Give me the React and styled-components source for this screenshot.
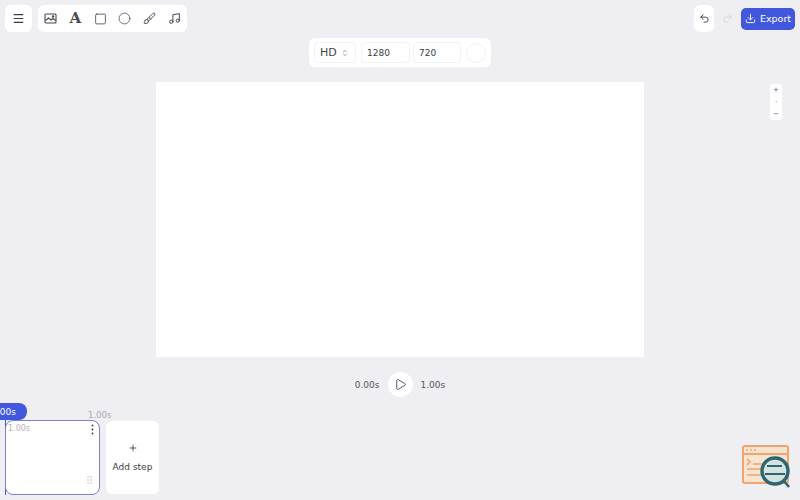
import React from 'react';
import styled, { createGlobalStyle } from 'styled-components';
import {
  Menu,
  Square,
  Circle,
  Brush,
  Music,
  Undo2,
  Redo2,
  Download,
  ChevronsUpDown,
  Play,
  Plus,
} from 'lucide-react';

const GlobalStyle = createGlobalStyle`
  html, body {
    margin: 0;
    padding: 0;
    height: 100%;
    background: #eeeef3;
    overflow: hidden;
  }
  body {
    font-family: "DejaVu Sans", sans-serif;
    color: #2c2c33;
  }
`;

const Page = styled.div`
  position: relative;
  width: 800px;
  height: 500px;
  overflow: hidden;
  display: flex;
  flex-direction: column;
`;

const TopBar = styled.div`
  display: flex;
  align-items: center;
  height: 27px;
  margin-top: 5px;
  padding: 0 5px;
`;

const Panel = styled.div`
  display: flex;
  align-items: center;
  justify-content: center;
  height: 27px;
  background: #fff;
  border-radius: 6px;
`;

const MenuPanel = styled(Panel)`
  width: 27px;
  margin-right: 6px;
`;

const ToolPanel = styled(Panel)`
  width: 149px;
  justify-content: space-between;
  padding: 0 6px;
  box-sizing: border-box;
`;

const Tool = styled.div`
  display: flex;
  align-items: center;
  justify-content: center;
  width: 13px;
  color: #44444c;
`;

const LetterTool = styled(Tool)`
  font-family: "DejaVu Serif", serif;
  font-weight: 700;
  font-size: 15px;
  line-height: 15px;
  color: #4a4a52;
`;

const Spacer = styled.div`
  flex: 1;
`;

const UndoPanel = styled(Panel)`
  width: 20px;
`;

const RedoSlot = styled.div`
  display: flex;
  justify-content: center;
  width: 27px;
  color: #d2d2d8;
`;

const ExportButton = styled.div`
  display: flex;
  align-items: center;
  justify-content: center;
  gap: 4px;
  width: 54px;
  height: 22px;
  border-radius: 5px;
  background: #4258dc;
  color: #fff;
  font-size: 9.5px;
`;

const SizeRow = styled.div`
  display: flex;
  justify-content: center;
  margin-top: 6px;
`;

const SizePanel = styled.div`
  display: flex;
  align-items: center;
  gap: 5px;
  width: 182px;
  height: 29px;
  padding: 0 5px;
  box-sizing: border-box;
  background: #fff;
  border-radius: 6px;
`;

const PresetSelect = styled.div`
  display: flex;
  flex: none;
  align-items: center;
  justify-content: space-between;
  box-sizing: border-box;
  width: 42px;
  height: 21px;
  padding: 0 6px 0 5px;
  border: 1px solid #f2f2f5;
  border-radius: 4px;
  font-size: 11px;
  color: #44444c;
`;

const SizeField = styled.div`
  display: flex;
  flex: none;
  align-items: center;
  box-sizing: border-box;
  width: ${(props) => props.$width}px;
  height: 21px;
  padding-left: 5px;
  margin-left: ${(props) => props.$pull || 0}px;
  border: 1px solid #f2f2f5;
  border-radius: 4px;
  font-size: 9px;
  color: #3c3c44;
`;

const Swatch = styled.div`
  flex: none;
  box-sizing: border-box;
  width: 20px;
  height: 20px;
  border: 1px solid #efeff2;
  border-radius: 50%;
  background: #fff;
`;

const CanvasRow = styled.div`
  display: flex;
  justify-content: center;
  margin-top: 15px;
`;

const Canvas = styled.div`
  width: 488px;
  height: 275px;
  background: #fff;
`;

const PlayRow = styled.div`
  display: flex;
  align-items: center;
  justify-content: center;
  gap: 8px;
  height: 27px;
  margin-top: 14px;
  font-size: 9px;
  color: #55555c;
`;

const PlayButton = styled.div`
  display: flex;
  align-items: center;
  justify-content: center;
  width: 25px;
  height: 25px;
  border-radius: 50%;
  background: #fff;
  color: #35353c;
`;

const Timeline = styled.div`
  position: relative;
  flex: 1;
  display: flex;
  align-items: flex-end;
  gap: 6px;
  padding: 0 0 5px 5px;
`;

const StepCard = styled.div`
  position: relative;
  display: flex;
  justify-content: space-between;
  box-sizing: border-box;
  width: 95px;
  height: 75px;
  padding: 3px 1px 0 2px;
  background: #fff;
  border: 1px solid #7b7fd6;
  border-radius: 8px;
  font-size: 8px;
  color: #b3b3b8;
`;

const CardMenu = styled.svg`
  flex: none;
`;

const AddStep = styled.div`
  display: flex;
  flex-direction: column;
  align-items: center;
  justify-content: center;
  gap: 9px;
  width: 53px;
  height: 73px;
  margin-bottom: 1px;
  background: #fff;
  border-radius: 6px;
  font-size: 9px;
  color: #3a3a42;
`;

const TimeBadge = styled.div`
  position: absolute;
  left: -16px;
  top: 5px;
  width: 43px;
  height: 17px;
  display: flex;
  align-items: center;
  justify-content: center;
  padding-right: 4px;
  box-sizing: border-box;
  border-radius: 0 8px 8px 0;
  background: #4258dc;
  color: #fff;
  font-size: 9px;
`;

const DurationLabel = styled.div`
  position: absolute;
  left: 88px;
  top: 12px;
  font-size: 8.5px;
  color: #a9a9ae;
`;

const Playhead = styled.div`
  position: absolute;
  left: 5px;
  top: 22px;
  width: 1px;
  height: 75px;
  background: #4258dc;
`;

const CardGrip = styled.svg`
  position: absolute;
  right: 6px;
  bottom: 10px;
`;

const ZoomRail = styled.div`
  position: absolute;
  left: 770px;
  top: 84px;
  width: 12px;
  height: 36px;
  display: flex;
  flex-direction: column;
  align-items: center;
  justify-content: space-between;
  background: #fff;
  border-radius: 3px;
  font-size: 7px;
  line-height: 12px;
  color: #55555c;
`;

const Logo = styled.svg`
  position: absolute;
  left: 741px;
  top: 444px;
`;

function PictureIcon() {
  return (
    <svg width="13" height="11" viewBox="0 0 13 11" fill="none" stroke="currentColor" strokeWidth="1.1">
      <rect x="1" y="1" width="11" height="9" rx="1" />
      <path d="M1.5 7.5l3-2.5 2.5 2 2-1.5 2.5 2" />
      <circle cx="9" cy="3.5" r="0.7" />
    </svg>
  );
}

export default function App() {
  return (
    <Page>
      <GlobalStyle />
      <TopBar>
        <MenuPanel>
          <Menu size={13} color="#3c3c44" strokeWidth={2.2} />
        </MenuPanel>
        <ToolPanel>
          <Tool><PictureIcon /></Tool>
          <LetterTool>A</LetterTool>
          <Tool><Square size={14} strokeWidth={1.5} /></Tool>
          <Tool><Circle size={15} strokeWidth={1.4} /></Tool>
          <Tool><Brush size={13} strokeWidth={1.8} /></Tool>
          <Tool><Music size={13} strokeWidth={1.8} /></Tool>
        </ToolPanel>
        <Spacer />
        <UndoPanel>
          <Undo2 size={11} color="#3c3c44" />
        </UndoPanel>
        <RedoSlot>
          <Redo2 size={11} />
        </RedoSlot>
        <ExportButton>
          <Download size={11} />
          Export
        </ExportButton>
      </TopBar>

      <SizeRow>
        <SizePanel>
          <PresetSelect>
            HD
            <ChevronsUpDown size={8} color="#77777e" />
          </PresetSelect>
          <SizeField $width={49}>1280</SizeField>
          <SizeField $width={48} $pull={-2}>720</SizeField>
          <Swatch />
        </SizePanel>
      </SizeRow>

      <CanvasRow>
        <Canvas />
      </CanvasRow>

      <PlayRow>
        0.00s
        <PlayButton>
          <Play size={13} strokeWidth={1.5} />
        </PlayButton>
        1.00s
      </PlayRow>

      <Timeline>
        <TimeBadge>1.00s</TimeBadge>
        <DurationLabel>1.00s</DurationLabel>
        <Playhead />
        <StepCard>
          1.00s
          <CardMenu width="11" height="11" viewBox="0 0 11 11" fill="#33333a">
            <circle cx="5.5" cy="1.5" r="0.9" />
            <circle cx="5.5" cy="5.5" r="0.9" />
            <circle cx="5.5" cy="9.5" r="0.9" />
          </CardMenu>
          <CardGrip width="6" height="8" viewBox="0 0 6 8" fill="#a9a9b0">
            <circle cx="1" cy="1" r="0.7" />
            <circle cx="4" cy="1" r="0.7" />
            <circle cx="1" cy="4" r="0.7" />
            <circle cx="4" cy="4" r="0.7" />
            <circle cx="1" cy="7" r="0.7" />
            <circle cx="4" cy="7" r="0.7" />
          </CardGrip>
        </StepCard>
        <AddStep>
          <Plus size={10} />
          Add step
        </AddStep>
      </Timeline>

      <ZoomRail>
        <span>+</span>
        <span>·</span>
        <span>−</span>
      </ZoomRail>

      <Logo width="50" height="46" viewBox="0 0 50 46" fill="none">
        <rect x="2" y="2" width="45" height="37" rx="2" fill="#f6e3d2" stroke="#f0a56f" strokeWidth="2" />
        <path d="M2 10h45" stroke="#f0a56f" strokeWidth="2" />
        <path d="M5 6h2M9 6h2M13 6h2" stroke="#f0a56f" strokeWidth="1.4" />
        <path d="M6 15l3 3-3 3M6 25h14M6 31h14M12 20h10" stroke="#f0a56f" strokeWidth="1.6" />
        <circle cx="34" cy="27" r="13" fill="#d5e3e0" stroke="#2c6670" strokeWidth="3.4" />
        <path d="M26 22h15M24 30h20" stroke="#2c6670" strokeWidth="1.8" />
        <path d="M43 37l5 6" stroke="#2c6670" strokeWidth="2.6" />
      </Logo>
    </Page>
  );
}
